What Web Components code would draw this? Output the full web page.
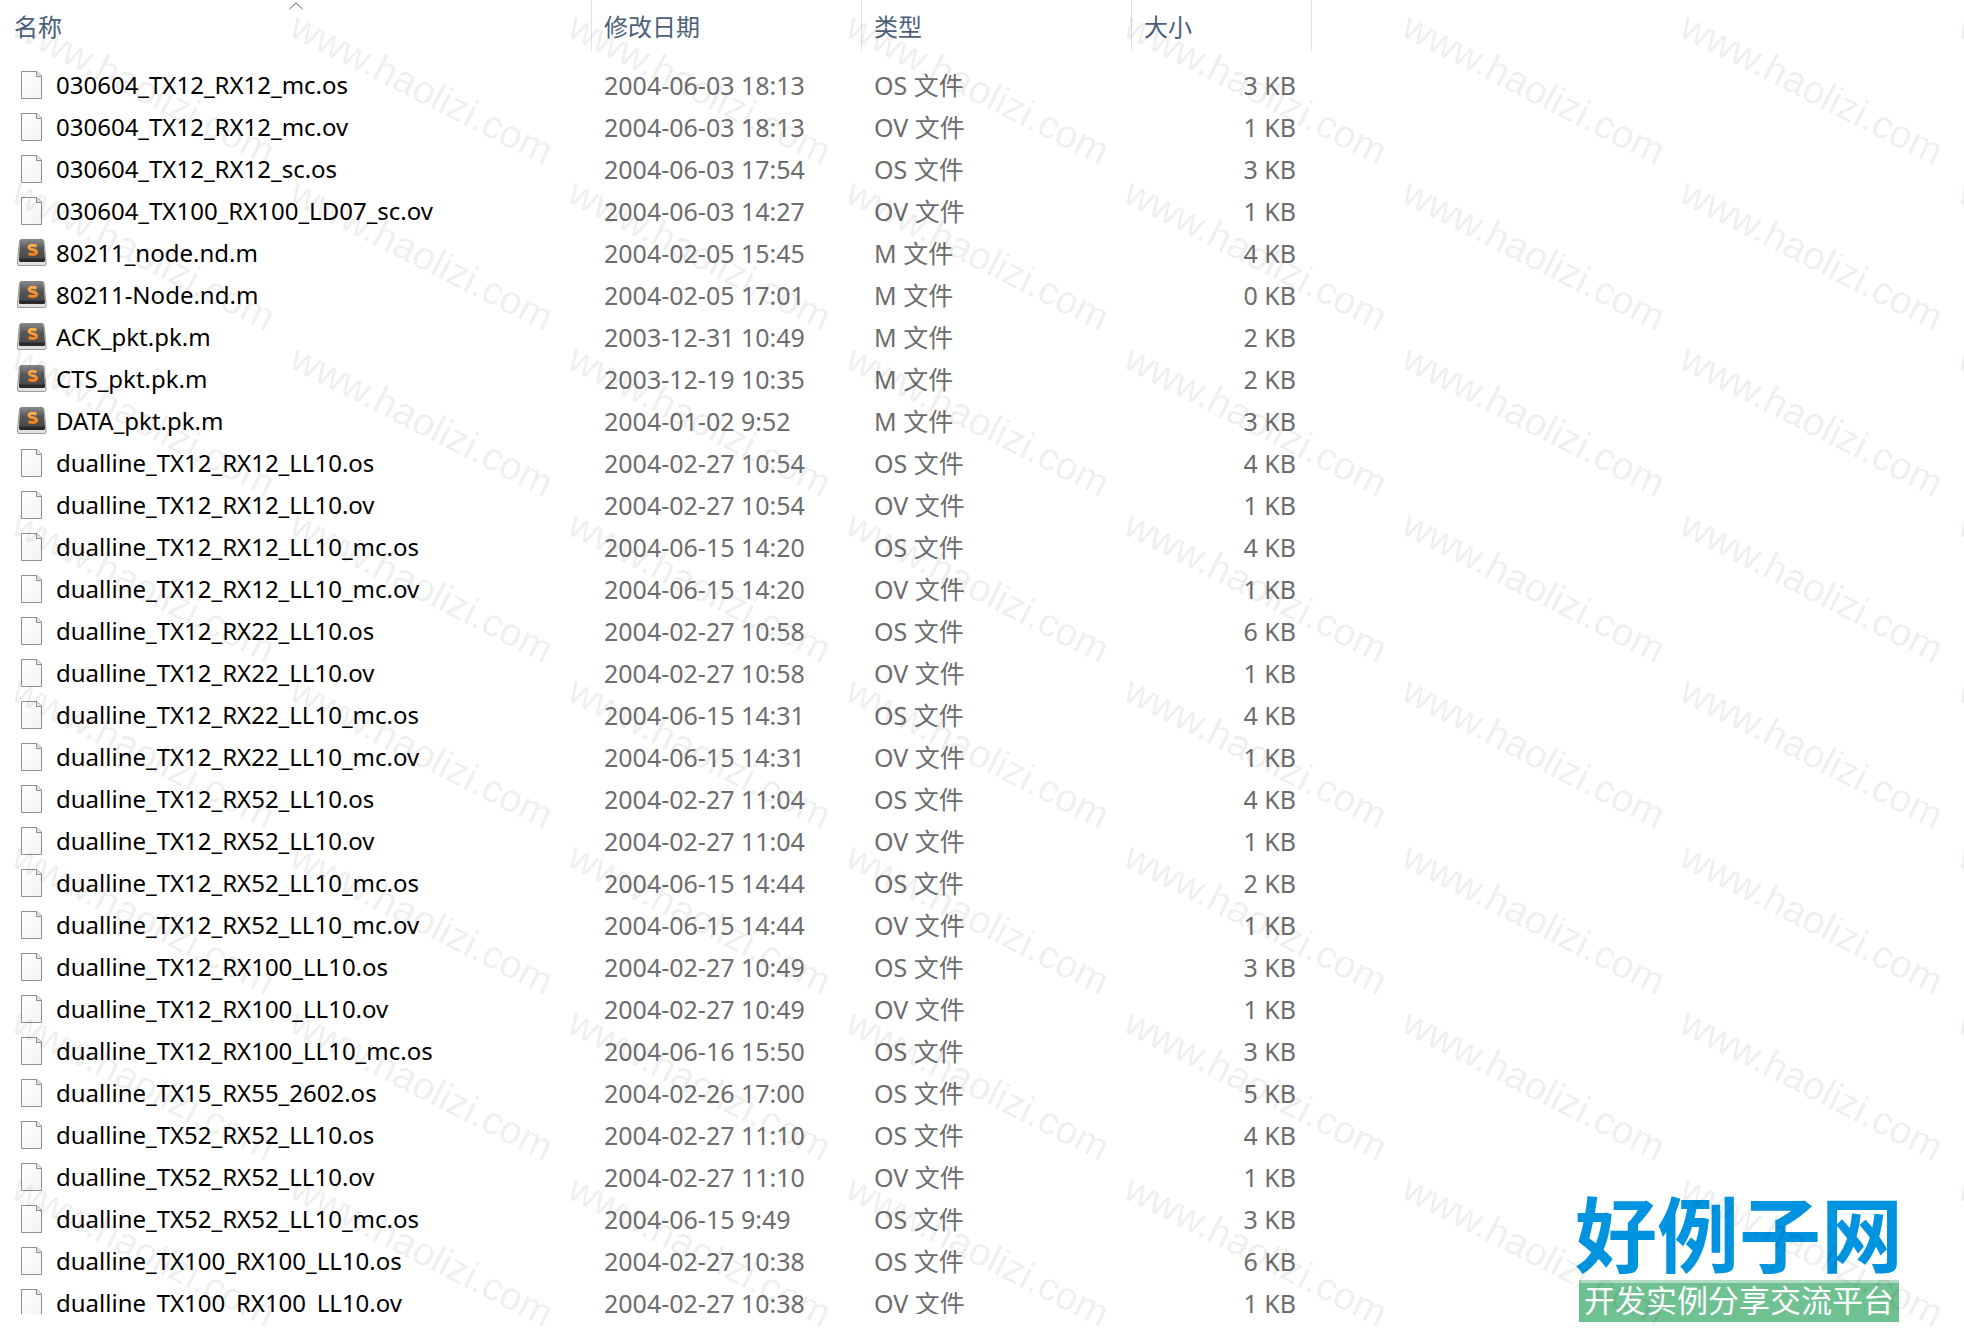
<!DOCTYPE html>
<html lang="zh-CN">
<head>
<meta charset="utf-8">
<title>文件列表</title>
<style>
  body {
    margin: 0;
    height: 100vh;
    display: flex;
    flex-direction: column;
    overflow: hidden;
    background: #fff;
    font-family: "Noto Sans", "Noto Sans CJK SC", sans-serif;
  }

  file-list {
    flex: 1;
    min-height: 0;
    margin-bottom: 18px;
  }
</style>
</head>
<body>
<file-list></file-list>
<site-badge>
  <span slot="name">好例子网</span>
  <span slot="slogan">开发实例分享交流平台</span>
</site-badge>
<water-mark text="www.haolizi.com"></water-mark>

<script>
const files = [
  ['030604_TX12_RX12_mc.os', '2004-06-03 18:13', 3],
  ['030604_TX12_RX12_mc.ov', '2004-06-03 18:13', 1],
  ['030604_TX12_RX12_sc.os', '2004-06-03 17:54', 3],
  ['030604_TX100_RX100_LD07_sc.ov', '2004-06-03 14:27', 1],
  ['80211_node.nd.m', '2004-02-05 15:45', 4],
  ['80211-Node.nd.m', '2004-02-05 17:01', 0],
  ['ACK_pkt.pk.m', '2003-12-31 10:49', 2],
  ['CTS_pkt.pk.m', '2003-12-19 10:35', 2],
  ['DATA_pkt.pk.m', '2004-01-02 9:52', 3],
  ['dualline_TX12_RX12_LL10.os', '2004-02-27 10:54', 4],
  ['dualline_TX12_RX12_LL10.ov', '2004-02-27 10:54', 1],
  ['dualline_TX12_RX12_LL10_mc.os', '2004-06-15 14:20', 4],
  ['dualline_TX12_RX12_LL10_mc.ov', '2004-06-15 14:20', 1],
  ['dualline_TX12_RX22_LL10.os', '2004-02-27 10:58', 6],
  ['dualline_TX12_RX22_LL10.ov', '2004-02-27 10:58', 1],
  ['dualline_TX12_RX22_LL10_mc.os', '2004-06-15 14:31', 4],
  ['dualline_TX12_RX22_LL10_mc.ov', '2004-06-15 14:31', 1],
  ['dualline_TX12_RX52_LL10.os', '2004-02-27 11:04', 4],
  ['dualline_TX12_RX52_LL10.ov', '2004-02-27 11:04', 1],
  ['dualline_TX12_RX52_LL10_mc.os', '2004-06-15 14:44', 2],
  ['dualline_TX12_RX52_LL10_mc.ov', '2004-06-15 14:44', 1],
  ['dualline_TX12_RX100_LL10.os', '2004-02-27 10:49', 3],
  ['dualline_TX12_RX100_LL10.ov', '2004-02-27 10:49', 1],
  ['dualline_TX12_RX100_LL10_mc.os', '2004-06-16 15:50', 3],
  ['dualline_TX15_RX55_2602.os', '2004-02-26 17:00', 5],
  ['dualline_TX52_RX52_LL10.os', '2004-02-27 11:10', 4],
  ['dualline_TX52_RX52_LL10.ov', '2004-02-27 11:10', 1],
  ['dualline_TX52_RX52_LL10_mc.os', '2004-06-15 9:49', 3],
  ['dualline_TX100_RX100_LL10.os', '2004-02-27 10:38', 6],
  ['dualline_TX100_RX100_LL10.ov', '2004-02-27 10:38', 1]
];

class FileIcon extends HTMLElement {
  constructor() {
    super();
    this.attachShadow({ mode: 'open' });
  }

  connectedCallback() {
    const page = `
      <defs>
        <linearGradient id="paper" x1="0" y1="0" x2="1" y2="1">
          <stop offset="0" stop-color="#fff"/>
          <stop offset="1" stop-color="#f1f3f5"/>
        </linearGradient>
      </defs>
      <path d="M5.500 2.500H21L25.500 7V29.500H5.500Z" fill="url(#paper)" stroke="#8c8e90"/>
      <path d="M20.500 2.500V7.500H25.500" fill="#e4e6e8" stroke="#8c8e90"/>`;

    const sublime = `
      <defs>
        <linearGradient id="key" x1="0" y1="0" x2="0" y2="1">
          <stop offset="0" stop-color="#8a8a8a"/>
          <stop offset=".45" stop-color="#565656"/>
          <stop offset="1" stop-color="#484848"/>
        </linearGradient>
        <linearGradient id="glow" x1="0" y1="0" x2="0" y2="1">
          <stop offset="0" stop-color="#ffb04c"/>
          <stop offset="1" stop-color="#f5811f"/>
        </linearGradient>
      </defs>
      <path d="M3.500 4Q4 2.500 5.500 2.500H26Q27.500 2.500 28 4L30 24V27Q30 28.500 28.500 28.500H3Q1.500 28.500 1.500 27V24Z" fill="#e2e2e2" stroke="#9a9a9a"/>
      <path d="M4 4Q4.500 2 6 2H25.500Q27 2 27.500 4L29 22Q29 24 27.500 24H4.500Q3 24 3 22Z" fill="url(#key)"/>
      <path d="M3 21.500H29V23.500Q29 25 27.500 25H4.500Q3 25 3 23.500Z" fill="#2a2a2a"/>
      <path d="M20.500 9Q13.200 7 13.200 10.500Q13.200 12 16.800 12.700Q20.500 13.400 20.500 15.200Q20.500 18.600 12.500 16.700" fill="none" stroke="url(#glow)" stroke-width="3"/>`;

    this.shadowRoot.innerHTML = `
      <style>
        :host {
          display: block;
          flex: none;
          width: 32px;
          height: 32px;
        }

        svg {
          display: block;
        }
      </style>
      <svg width="32" height="32" viewBox="0 0 32 32" aria-hidden="true">
        ${this.getAttribute('kind') === 'm' ? sublime : page}
      </svg>`;
  }
}

customElements.define('file-icon', FileIcon);

class FileList extends HTMLElement {
  constructor() {
    super();

    const template = document.createElement('template');

    template.innerHTML = `
      <style>
        :host {
          display: block;
          overflow: hidden;
        }

        table {
          width: 100%;
          table-layout: fixed;
          border-collapse: separate;
          border-spacing: 0;
        }

        .col-name { width: 592px; }
        .col-date, .col-type { width: 270px; }
        .col-size { width: 180px; }

        th {
          position: relative;
          height: 52px;
          padding: 0;
          background: linear-gradient(#e2e2e2, #e2e2e2) right top / 1px 51px no-repeat;
          text-align: left;
        }

        th.rest {
          background: none;
        }

        th button {
          display: block;
          width: 100%;
          height: 52px;
          padding: 2px 12px 0;
          border: 0;
          background: none;
          color: #4c607a;
          font: 24px/50px "Noto Sans", "Noto Sans CJK SC", sans-serif;
          text-align: left;
        }

        th:first-child button {
          padding-left: 14px;
        }

        /* sort arrow sits over the sorted column's title */
        th svg {
          position: absolute;
          top: 2px;
          left: 50%;
          margin-left: -7px;
        }

        tbody::before {
          content: "";
          display: block;
          height: 12px;
        }

        td {
          height: 42px;
          padding: 0 12px;
          color: #6d6d6d;
          font-size: 25px;
          line-height: 42px;
          white-space: nowrap;
        }

        td.name {
          padding: 0 16px;
          color: #000;
          font-size: 24px;
        }

        .file {
          display: flex;
          align-items: center;
          gap: 8px;
          height: 42px;
        }

        td.size {
          padding-right: 16px;
          text-align: right;
        }
      </style>
      <table>
        <colgroup>
          <col class="col-name"><col class="col-date"><col class="col-type"><col class="col-size"><col>
        </colgroup>
        <thead>
          <tr>
            <th aria-sort="ascending">
              <button type="button">名称</button>
              <svg width="14" height="8" viewBox="0 0 14 8" aria-hidden="true"><path d="M.5 7L7 .8L13.500 7" fill="none" stroke="#555"/></svg>
            </th>
            <th><button type="button">修改日期</button></th>
            <th><button type="button">类型</button></th>
            <th><button type="button">大小</button></th>
            <th class="rest"></th>
          </tr>
        </thead>
        <tbody></tbody>
      </table>`;

    this.attachShadow({ mode: 'open' });
    this.shadowRoot.appendChild(template.content.cloneNode(true));
  }

  set files(list) {
    this.shadowRoot.querySelector('tbody').innerHTML = list.map(([name, date, size]) => {
      const ext = name.split('.').pop();
      return `
        <tr>
          <td class="name"><div class="file"><file-icon kind="${ext}"></file-icon><span>${name}</span></div></td>
          <td>${date}</td>
          <td>${ext.toUpperCase()} 文件</td>
          <td class="size">${size} KB</td>
          <td></td>
        </tr>`;
    }).join('');
  }
}

customElements.define('file-list', FileList);

class SiteBadge extends HTMLElement {
  constructor() {
    super();
    this.attachShadow({ mode: 'open' });
    this.shadowRoot.innerHTML = `
      <style>
        :host {
          position: absolute;
          right: 65px;
          bottom: 10px;
          width: 320px;
          white-space: nowrap;
        }

        .name {
          display: flex;
          justify-content: center;
          height: 84px;
          color: #0093e0;
          font: bold 82px/70px "Noto Sans CJK SC", sans-serif;
        }

        .slogan {
          height: 39px;
          border-top: 3px solid #b2dcc4;
          background: #70c192;
          color: #fff;
          font: 31px/32px "Noto Sans CJK SC", sans-serif;
          text-align: center;
        }
      </style>
      <div class="name"><slot name="name"></slot></div>
      <div class="slogan"><slot name="slogan"></slot></div>`;
  }
}

customElements.define('site-badge', SiteBadge);

class WaterMark extends HTMLElement {
  constructor() {
    super();
    this.attachShadow({ mode: 'open' });
  }

  connectedCallback() {
    const text = this.getAttribute('text');
    this.shadowRoot.innerHTML = `
      <style>
        :host {
          position: absolute;
          inset: 0;
          display: grid;
          grid-template-columns: repeat(8, 278px);
          grid-auto-rows: 166px;
          padding: 2px 0 0 10px;
          overflow: hidden;
          pointer-events: none;
          color: rgba(0, 0, 0, .08);
          font: 39px/40px "Liberation Sans", Arial, sans-serif;
        }

        span {
          transform: rotate(27deg);
          transform-origin: 0 32px;
          white-space: nowrap;
        }
      </style>
      ${`<span>${text}</span>`.repeat(64)}`;
  }
}

customElements.define('water-mark', WaterMark);

document.querySelector('file-list').files = files;
</script>
</body>
</html>
